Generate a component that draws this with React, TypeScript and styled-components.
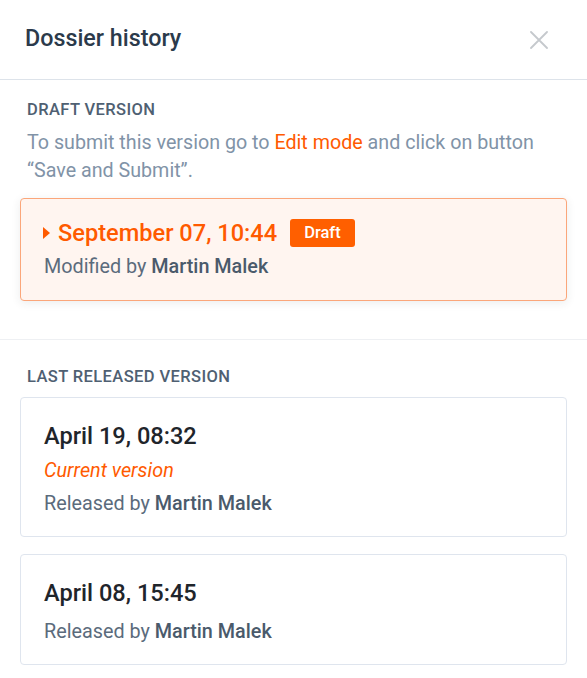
import React from "react";
import styled, { createGlobalStyle } from "styled-components";

const GlobalStyle = createGlobalStyle`
  * { box-sizing: border-box; }
  html, body { margin: 0; padding: 0; background: #ffffff; }
  body { font-family: Roboto, "Liberation Sans", Arial, sans-serif; -webkit-font-smoothing: antialiased; }
`;

const Panel = styled.div`
  width: 587px;
  background: #ffffff;
  display: flex;
  flex-direction: column;
`;

const Header = styled.header`
  height: 80px;
  display: flex;
  align-items: center;
  justify-content: space-between;
  padding: 0 38px 3px 25px;
  border-bottom: 1px solid #dde3ea;
`;

const Title = styled.h1`
  margin: 0;
  font-size: 23.3px;
  line-height: 30px;
  font-weight: 500;
  color: #2b3a4b;
`;

const CloseButton = styled.button`
  margin-top: 3px;
  width: 20px;
  height: 20px;
  padding: 0;
  border: none;
  background: none;
  display: flex;
  align-items: center;
  justify-content: center;
  cursor: pointer;
`;

const Section = styled.section<{ $top: number; $bottom: number; $divider?: boolean }>`
  padding: ${(p) => p.$top}px 20px ${(p) => p.$bottom}px;
  border-bottom: ${(p) => (p.$divider ? "1px solid #eef0f3" : "none")};
  display: flex;
  flex-direction: column;
`;

const Label = styled.h2<{ $mb: number }>`
  margin: 0 0 ${(p) => p.$mb}px;
  padding-left: 7px;
  font-size: 16.5px;
  line-height: 20px;
  font-weight: 500;
  letter-spacing: 0.4px;
  text-transform: uppercase;
  color: #4f6072;
`;

const Hint = styled.p`
  margin: 0 0 13px;
  padding-left: 7px;
  font-size: 19.7px;
  line-height: 28px;
  color: #8193a7;
`;

const HintLink = styled.span`
  color: #ff5a00;
`;

const Card = styled.div<{ $draft?: boolean }>`
  border: 1px solid ${(p) => (p.$draft ? "#fba67a" : "#dfe5ee")};
  background: ${(p) => (p.$draft ? "#fff5f0" : "#ffffff")};
  border-radius: 4px;
  box-shadow: ${(p) => (p.$draft ? "0 2px 10px rgba(40, 50, 60, 0.09)" : "none")};
  padding: ${(p) => (p.$draft ? "20px 23px 20px" : "23px 23px 19px")};
  display: flex;
  flex-direction: column;
`;

const CardList = styled.div`
  display: flex;
  flex-direction: column;
  gap: 17px;
`;

const DateRow = styled.div`
  display: flex;
  align-items: center;
  height: 28px;
`;

const Caret = styled.span`
  width: 0;
  height: 0;
  margin-left: -1px;
  border-top: 6px solid transparent;
  border-bottom: 6px solid transparent;
  border-left: 7px solid #ff5a00;
  margin-right: 8px;
`;

const DateText = styled.span<{ $draft?: boolean }>`
  font-size: 23.6px;
  line-height: 30px;
  font-weight: 500;
  color: ${(p) => (p.$draft ? "#ff5a00" : "#1f252b")};
`;

const Badge = styled.span`
  margin-left: 13px;
  height: 28px;
  padding: 0 14px;
  border-radius: 3px;
  background: #ff5f00;
  color: #ffffff;
  font-size: 16.5px;
  font-weight: 500;
  line-height: 28px;
`;

const MetaList = styled.div<{ $mt: number }>`
  margin-top: ${(p) => p.$mt}px;
  display: flex;
  flex-direction: column;
  gap: 7px;
`;

const Meta = styled.div`
  font-size: 19.8px;
  line-height: 26px;
  color: #5b6b7c;
`;

const Author = styled.strong`
  font-weight: 500;
  color: #4a5a6b;
`;

const CurrentTag = styled.div`
  margin-top: -4px;
  font-size: 19.8px;
  line-height: 26px;
  font-style: italic;
  color: #ff5a00;
`;

type Release = { date: string; current?: boolean; author: string };

const releases: Release[] = [
  { date: "April 19, 08:32", current: true, author: "Martin Malek" },
  { date: "April 08, 15:45", author: "Martin Malek" },
];

export default function App() {
  return (
    <>
      <GlobalStyle />
      <Panel>
        <Header>
          <Title>Dossier history</Title>
          <CloseButton aria-label="Close">
            <svg width="18" height="18" viewBox="0 0 18 18">
              <path d="M1 1 L17 17 M17 1 L1 17" stroke="#c5c9cd" strokeWidth="1.8" strokeLinecap="round" />
            </svg>
          </CloseButton>
        </Header>

        <Section $top={20} $bottom={38} $divider>
          <Label $mb={9}>Draft version</Label>
          <Hint>
            To submit this version go to <HintLink>Edit mode</HintLink> and click on button “Save and Submit”.
          </Hint>
          <Card $draft>
            <DateRow>
              <Caret />
              <DateText $draft>September 07, 10:44</DateText>
              <Badge>Draft</Badge>
            </DateRow>
            <MetaList $mt={7}>
              <Meta>
                Modified by <Author>Martin Malek</Author>
              </Meta>
            </MetaList>
          </Card>
        </Section>

        <Section $top={27} $bottom={24}>
          <Label $mb={10}>Last released version</Label>
          <CardList>
            {releases.map((r) => (
              <Card key={r.date}>
                <DateText>{r.date}</DateText>
                <MetaList $mt={11}>
                  {r.current && <CurrentTag>Current version</CurrentTag>}
                  <Meta>
                    Released by <Author>{r.author}</Author>
                  </Meta>
                </MetaList>
              </Card>
            ))}
          </CardList>
        </Section>
      </Panel>
    </>
  );
}
